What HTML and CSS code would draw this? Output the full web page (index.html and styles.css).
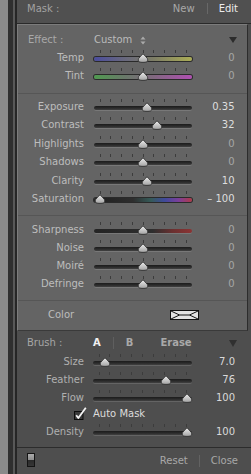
FILE: index.html
```html
<!DOCTYPE html>
<html>
<head>
<meta charset="utf-8">
<link rel="stylesheet" href="styles.css">
</head>
<body>
<svg class="defs" width="0" height="0" aria-hidden="true">
  <defs>
    <linearGradient id="tg" x1="0" y1="0" x2="0" y2="1">
      <stop offset="0" stop-color="#efefef"/>
      <stop offset="1" stop-color="#a2a2a2"/>
    </linearGradient>
    <symbol id="thumb" viewBox="0 0 11 10">
      <path d="M5.5 0.6 C6.6 2.6 10.4 4.8 10.4 7 C10.4 8.8 8.8 9.4 5.5 9.4 C2.2 9.4 0.6 8.8 0.6 7 C0.6 4.8 4.4 2.6 5.5 0.6 Z" fill="url(#tg)" stroke="#2e2e2e" stroke-width="0.9"/>
    </symbol>
    <symbol id="ticks" viewBox="0 0 1 1"></symbol>
  </defs>
</svg>
<div class="frame">
  <div class="edge e1"></div>
  <div class="edge e2"></div>
  <div class="edge e3"></div>
  <div class="edge e4"></div>
  <div class="main">
    <div class="header">
      <span class="mask">Mask :</span>
      <span class="hlinks"><span class="new">New</span><i class="vsep"></i><span class="edit">Edit</span></span>
    </div>

    <div class="panel">
      <div class="sec s1">
        <div class="row">
          <span class="lbl left">Effect :</span>
          <span class="custom">Custom<svg class="updown" width="6" height="9" viewBox="0 0 6 9"><path d="M0.5 3.6 L3 0.6 L5.5 3.6Z M0.5 5.4 L3 8.4 L5.5 5.4Z" fill="#a9a9a9"/></svg></span>
          <span class="val tri"><svg width="8" height="6" viewBox="0 0 8 6"><path d="M0 0 H8 L4 6Z" fill="#2c2c2c"/></svg></span>
        </div>
        <div class="row">
          <span class="lbl">Temp</span>
          <div class="slider"><div class="track temp"></div><div class="lane"><span class="ticks"><i></i><i></i><i></i><i></i><i></i><i></i><i></i><i></i><i></i></span><svg class="thumb" style="left:50%"><use href="#thumb"/></svg></div></div>
          <span class="val dim">0</span>
        </div>
        <div class="row">
          <span class="lbl">Tint</span>
          <div class="slider"><div class="track tint"></div><div class="lane"><span class="ticks"><i></i><i></i><i></i><i></i><i></i><i></i><i></i><i></i><i></i></span><svg class="thumb" style="left:50%"><use href="#thumb"/></svg></div></div>
          <span class="val dim">0</span>
        </div>
      </div>

      <div class="sec s2">
        <div class="row">
          <span class="lbl">Exposure</span>
          <div class="slider"><div class="track"></div><div class="lane"><span class="ticks"><i></i><i></i><i></i><i></i><i></i><i></i><i></i><i></i><i></i></span><svg class="thumb" style="left:54.4%"><use href="#thumb"/></svg></div></div>
          <span class="val">0.35</span>
        </div>
        <div class="row">
          <span class="lbl">Contrast</span>
          <div class="slider"><div class="track"></div><div class="lane"><span class="ticks"><i></i><i></i><i></i><i></i><i></i><i></i><i></i><i></i><i></i></span><svg class="thumb" style="left:66%"><use href="#thumb"/></svg></div></div>
          <span class="val">32</span>
        </div>
        <div class="row">
          <span class="lbl">Highlights</span>
          <div class="slider"><div class="track"></div><div class="lane"><span class="ticks"><i></i><i></i><i></i><i></i><i></i><i></i><i></i><i></i><i></i></span><svg class="thumb" style="left:50%"><use href="#thumb"/></svg></div></div>
          <span class="val dim">0</span>
        </div>
        <div class="row">
          <span class="lbl">Shadows</span>
          <div class="slider"><div class="track"></div><div class="lane"><span class="ticks"><i></i><i></i><i></i><i></i><i></i><i></i><i></i><i></i><i></i></span><svg class="thumb" style="left:50%"><use href="#thumb"/></svg></div></div>
          <span class="val dim">0</span>
        </div>
        <div class="row">
          <span class="lbl">Clarity</span>
          <div class="slider"><div class="track"></div><div class="lane"><span class="ticks"><i></i><i></i><i></i><i></i><i></i><i></i><i></i><i></i><i></i></span><svg class="thumb" style="left:55%"><use href="#thumb"/></svg></div></div>
          <span class="val">10</span>
        </div>
        <div class="row">
          <span class="lbl">Saturation</span>
          <div class="slider"><div class="track sat"></div><div class="lane"><span class="ticks"><i></i><i></i><i></i><i></i><i></i><i></i><i></i><i></i><i></i></span><svg class="thumb" style="left:0%"><use href="#thumb"/></svg></div></div>
          <span class="val">– 100</span>
        </div>
      </div>

      <div class="sec s3">
        <div class="row">
          <span class="lbl">Sharpness</span>
          <div class="slider"><div class="track sharp"></div><div class="lane"><span class="ticks"><i></i><i></i><i></i><i></i><i></i><i></i><i></i><i></i><i></i></span><svg class="thumb" style="left:50%"><use href="#thumb"/></svg></div></div>
          <span class="val dim">0</span>
        </div>
        <div class="row">
          <span class="lbl">Noise</span>
          <div class="slider"><div class="track"></div><div class="lane"><span class="ticks"><i></i><i></i><i></i><i></i><i></i><i></i><i></i><i></i><i></i></span><svg class="thumb" style="left:50%"><use href="#thumb"/></svg></div></div>
          <span class="val dim">0</span>
        </div>
        <div class="row">
          <span class="lbl">Moiré</span>
          <div class="slider"><div class="track"></div><div class="lane"><span class="ticks"><i></i><i></i><i></i><i></i><i></i><i></i><i></i><i></i><i></i></span><svg class="thumb" style="left:50%"><use href="#thumb"/></svg></div></div>
          <span class="val dim">0</span>
        </div>
        <div class="row">
          <span class="lbl">Defringe</span>
          <div class="slider"><div class="track"></div><div class="lane"><span class="ticks"><i></i><i></i><i></i><i></i><i></i><i></i><i></i><i></i><i></i></span><svg class="thumb" style="left:50%"><use href="#thumb"/></svg></div></div>
          <span class="val dim">0</span>
        </div>
      </div>

      <div class="sec s4">
        <div class="crow">
          <span class="clbl">Color</span>
          <svg class="swatch" width="29" height="10" viewBox="0 0 29 10"><rect x="0.5" y="0.5" width="28" height="9" fill="#e2e2e2" stroke="#111"/><path d="M1 1 L9.5 5 L1 9 M9.5 5 H19.5 M28 1 L19.5 5 L28 9" fill="none" stroke="#111" stroke-width="1"/></svg>
        </div>
      </div>
    </div>

    <div class="brush">
      <div class="brow">
        <span class="lbl left">Brush :</span>
        <span class="abe"><b class="on">A</b><i class="vsep2"></i><b>B</b><b class="erase">Erase</b></span>
        <span class="val tri"><svg width="8" height="7" viewBox="0 0 8 7"><path d="M0 0 H8 L4 7Z" fill="#303030"/></svg></span>
      </div>
      <div class="brow">
        <span class="lbl">Size</span>
        <div class="slider"><div class="track"></div><div class="lane"><span class="ticks"><i></i><i></i><i></i><i></i><i></i><i></i><i></i><i></i><i></i></span><svg class="thumb" style="left:6.9%"><use href="#thumb"/></svg></div></div>
        <span class="val">7.0</span>
      </div>
      <div class="brow">
        <span class="lbl">Feather</span>
        <div class="slider"><div class="track"></div><div class="lane"><span class="ticks"><i></i><i></i><i></i><i></i><i></i><i></i><i></i><i></i><i></i></span><svg class="thumb" style="left:76%"><use href="#thumb"/></svg></div></div>
        <span class="val">76</span>
      </div>
      <div class="brow">
        <span class="lbl">Flow</span>
        <div class="slider"><div class="track"></div><div class="lane"><span class="ticks"><i></i><i></i><i></i><i></i><i></i><i></i><i></i><i></i><i></i></span><svg class="thumb" style="left:100%"><use href="#thumb"/></svg></div></div>
        <span class="val">100</span>
      </div>
      <div class="brow amrow">
        <span class="chk"><svg width="14" height="14" viewBox="0 0 14 14"><rect x="0.5" y="5.5" width="8.5" height="8" fill="#3a3a3a" stroke="#0c0c0c"/><path d="M2.2 9.2 L4.3 12 L11.8 1.8" fill="none" stroke="#f4f4f4" stroke-width="1.8" stroke-linejoin="round"/></svg></span>
        <span class="amtext">Auto Mask</span>
      </div>
      <div class="brow">
        <span class="lbl">Density</span>
        <div class="slider"><div class="track"></div><div class="lane"><span class="ticks"><i></i><i></i><i></i><i></i><i></i><i></i><i></i><i></i><i></i></span><svg class="thumb" style="left:100%"><use href="#thumb"/></svg></div></div>
        <span class="val">100</span>
      </div>
    </div>

    <div class="foot">
      <span class="toggle"></span>
      <span class="flinks"><span>Reset</span><i class="vsep3"></i><span>Close</span></span>
    </div>
  </div>
</div>
</body>
</html>
```
FILE: styles.css
```css
* { box-sizing: border-box; margin: 0; padding: 0; }
html, body { width: 251px; height: 474px; overflow: hidden; }
body {
  font-family: "DejaVu Sans", sans-serif;
  font-size: 10px;
  line-height: 13px;
  background: #8a8a8a;
  color: #bdbdbd;
}
.defs { position: absolute; width: 0; height: 0; overflow: hidden; }
.frame { display: flex; height: 474px; }
.edge { flex: none; height: 100%; }
.e1 { width: 8px; background: #8a8a8a; }
.e2 { width: 5px; background: #2f2f2f; }
.e3 { width: 2px; background: #585858; }
.e4 { width: 2px; background: #262626; }
.main {
  flex: 1; min-width: 0;
  display: flex; flex-direction: column;
  background: #4e4e4e;
}

/* header */
.header {
  height: 24px; flex: none;
  display: flex; align-items: flex-start;
  padding: 2px 13px 0 10px;
  background: #505050;
  border-bottom: 1px solid #2a2a2a;
}
.mask { color: #a2a2a2; }
.hlinks { margin-left: auto; display: flex; align-items: flex-start; }
.new { color: #a8a8a8; }
.edit { color: #ececec; }
.vsep { display: block; width: 1px; height: 11px; background: #686868; margin: 1px 11px 0 12px; }

/* main panel */
.panel {
  flex: none;
  background: #646464;
  border-top: 1px solid #7c7c7c;
  border-left: 1px solid #7c7c7c;
  border-right: 1px solid #2c2c2c;
  border-bottom: 1px solid #3a3a3a;
  margin-right: 3px;
}
.sec + .sec { border-top: 1px solid #565656; }
.s1 { padding: 6px 0 8px; }
.s2 { padding: 4px 0 7px; }
.s3 { padding: 4.5px 0 7px; }
.s4 { padding: 5px 0 6px; }

.row {
  display: grid;
  grid-template-columns: 66px 98px 1fr;
  column-gap: 10px;
  padding-right: 12.5px;
  height: 18px;
  line-height: 18px;
}
.s2 .row { height: 18.4px; line-height: 18.4px; }
.lbl { text-align: right; white-space: nowrap; color: #bdbdbd; }
.lbl.left { text-align: left; padding-left: 10px; color: #a8a8a8; }
.val { text-align: right; color: #dedede; white-space: nowrap; }
.val.dim { color: #a6a6a6; }
.val.tri { display: flex; justify-content: flex-end; align-items: center; margin-right: -2.5px; }
.custom { color: #bababa; display: flex; align-items: center; }
.updown { margin-left: 8px; }

/* sliders */
.slider { position: relative; }
.track {
  margin-top: 8px;
  height: 4px;
  border-radius: 2px;
  background: linear-gradient(#1b1b1b, #2c2c2c 55%, #424242);
  box-shadow: 0 1px 0 rgba(255, 255, 255, 0.13);
}
.track.temp {
  background: linear-gradient(to right, #4b4d9e, #67677e 30%, #7c7c66 60%, #abad56);
  box-shadow: 0 0 0 1px #2a2a2a;
}
.track.tint {
  background: linear-gradient(to right, #4f9a4f, #687a68 30%, #80687f 60%, #b04fb2);
  box-shadow: 0 0 0 1px #2a2a2a;
}
.track.sat {
  background: linear-gradient(to right, #1f1f1f, #2e2e2e 40%, #355a58 58%, #3f4a9a 72%, #7a3f9a 86%, #b03a48);
  box-shadow: 0 0 0 1px #2a2a2a;
}
.track.sharp {
  background: linear-gradient(to right, #242424, #2e2e2e 60%, #6a3030 80%, #8c3434);
  box-shadow: 0 1px 0 rgba(255, 255, 255, 0.13);
}
.lane { position: absolute; top: 0; bottom: 0; left: 5.5px; right: 5.5px; }
.ticks {
  position: absolute; left: 0; right: 0; top: 1px; height: 3px;
  display: flex; justify-content: space-between;
}
.ticks i { display: block; width: 1px; height: 3px; background: #3c3c3c; }
.thumb { position: absolute; top: 4px; width: 11px; height: 10px; transform: translateX(-50%); }

/* color row */
.crow { display: flex; align-items: center; height: 18px; padding-left: 30px; }
.clbl { color: #bdbdbd; }
.swatch { margin-left: auto; margin-right: 48px; display: block; }

/* brush section */
.brush {
  flex: none;
  padding: 3.5px 0 6px;
  border-bottom: 1px solid #2c2c2c;
}
.brow {
  display: grid;
  grid-template-columns: 67px 99.4px 1fr;
  column-gap: 9px;
  padding-right: 16px;
  height: 18.3px;
  line-height: 18.3px;
}
.brow .lbl { color: #b0b0b0; }
.brow .lbl.left { padding-left: 10px; color: #a6a6a6; }
.brow .val { color: #d9d9d9; }
.brow .val.tri { margin-right: -2px; }
.abe { display: flex; align-items: center; font-weight: bold; color: #a9a9a9; }
.abe b { font-weight: bold; }
.abe .on { color: #f0f0f0; }
.vsep2 { display: block; width: 1px; height: 12px; background: #5f5f5f; margin: 0 12px 0 12px; }
.abe .erase { margin-left: 27px; }
.amrow { height: 15px; line-height: 12px; }
.chk { display: flex; justify-content: flex-end; align-items: flex-start; margin-right: -4px; margin-top: -2px; }
.chk svg { display: block; }
.amtext { color: #dcdcdc; white-space: nowrap; }

/* footer */
.foot {
  flex: 1;
  display: flex; align-items: flex-start;
  padding: 5.5px 13px 0 10px;
  background: #4e4e4e;
}
.toggle {
  display: block; width: 8px; height: 14px;
  border: 1px solid #141414;
  background: linear-gradient(#ababab, #8c8c8c 50%, #2a2a2a 50%, #363636);
}
.flinks { margin-left: auto; display: flex; align-items: flex-start; color: #a8a8a8; padding-top: 0.5px; }
.vsep3 { display: block; width: 1px; height: 12px; background: #626262; margin: 1px 11px 0 11px; }
```
